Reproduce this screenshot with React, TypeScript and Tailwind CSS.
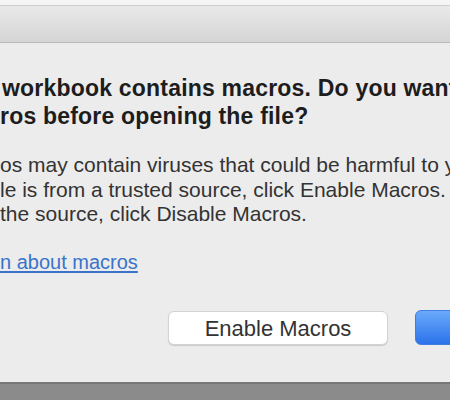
import React from "react";

const App = () => {
  return (
    <div
      className="w-[450px] h-[400px] overflow-hidden flex flex-col bg-[#ececec]"
      style={{ fontFamily: '"Liberation Sans", Arial, sans-serif' }}
    >
      {/* window title strip */}
      <div className="h-[6px] bg-[#f5f5f5] border-b border-[#cdcdcd]" />
      <div className="h-[37px] bg-gradient-to-b from-[#e9e9e9] to-[#d5d5d5] border-b border-[#b9b9b9]" />

      {/* dialog body */}
      <div className="flex-1 flex flex-col pt-[31px] overflow-hidden">
        <div className="text-[23px] leading-[28px] font-bold text-[#1d1d1d] whitespace-nowrap tracking-[0.2px]">
          <p className="pl-[2px]">workbook contains macros. Do you want</p>
          <p>ros before opening the file?</p>
        </div>

        <div className="mt-[23px] text-[21px] leading-[24.5px] text-[#333] whitespace-nowrap">
          <p>os may contain viruses that could be harmful to your</p>
          <p>le is from a trusted source, click Enable Macros. If</p>
          <p>the source, click Disable Macros.</p>
        </div>

        <a
          href="#"
          className="mt-[23px] text-[20px] leading-[24px] text-[#3a73c9] underline underline-offset-2 w-fit"
        >
          n about macros
        </a>

        <div className="mt-[37px] flex flex-row items-start justify-end gap-[27px] -mr-[40px]">
          <button className="w-[220px] h-[34px] rounded-[6px] bg-white border border-[#d3d3d3] shadow-[0_1px_1px_rgba(0,0,0,0.15)] text-[22px] text-[#333]">
            Enable Macros
          </button>
          <button className="w-[75px] h-[35px] -mt-[1px] rounded-[6px] bg-gradient-to-b from-[#6aa9fb] to-[#2c72ea] border border-[#3d7ee0]" />
        </div>
      </div>

      {/* desktop behind */}
      <div className="h-[18px] bg-[#8b8b8b] border-t-2 border-[#777]" />
    </div>
  );
};

export default App;
